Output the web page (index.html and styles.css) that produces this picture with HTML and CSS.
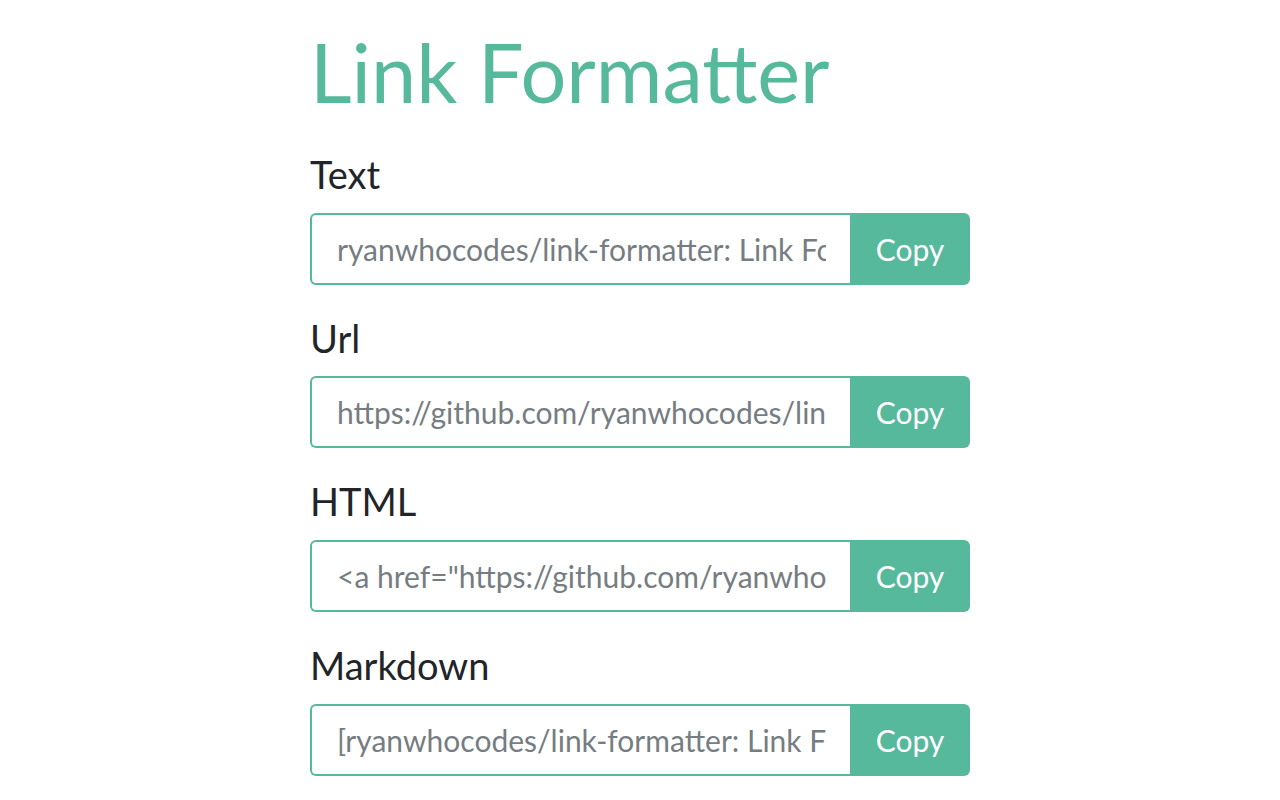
FILE: index.html
```html
<!DOCTYPE html>
<html lang="en">
<head>
<meta charset="utf-8">
<title>Link Formatter</title>
<link rel="stylesheet" href="styles.css">
</head>
<body>
<main class="container">
  <h1 class="title">Link Formatter</h1>

  <section class="field">
    <label class="field-label" for="f-text">Text</label>
    <div class="input-group">
      <input class="input" id="f-text" type="text" value="ryanwhocodes/link-formatter: Link Formatter" readonly>
      <button class="copy-btn" type="button">Copy</button>
    </div>
  </section>

  <section class="field">
    <label class="field-label" for="f-url">Url</label>
    <div class="input-group">
      <input class="input" id="f-url" type="text" value="https://github.com/ryanwhocodes/link-formatter" readonly>
      <button class="copy-btn" type="button">Copy</button>
    </div>
  </section>

  <section class="field">
    <label class="field-label" for="f-html">HTML</label>
    <div class="input-group">
      <input class="input" id="f-html" type="text" value="&lt;a href=&quot;https://github.com/ryanwhocodes/link-formatter&quot;&gt;ryanwhocodes/link-formatter&lt;/a&gt;" readonly>
      <button class="copy-btn" type="button">Copy</button>
    </div>
  </section>

  <section class="field">
    <label class="field-label" for="f-md">Markdown</label>
    <div class="input-group">
      <input class="input" id="f-md" type="text" value="[ryanwhocodes/link-formatter: Link Formatter](https://github.com/ryanwhocodes/link-formatter)" readonly>
      <button class="copy-btn" type="button">Copy</button>
    </div>
  </section>
</main>
</body>
</html>
```

FILE: styles.css
```css
* { box-sizing: border-box; }

html, body {
  margin: 0;
  padding: 0;
  background: #ffffff;
}

body {
  font-family: Lato, "Open Sans", sans-serif;
  color: #212529;
}

.container {
  width: 660px;
  margin: 0 auto;
  padding-top: 23px;
}

.title {
  margin: 0 0 32px 0;
  font-size: 81px;
  font-weight: 400;
  line-height: 1.2;
  color: #57b99c;
}

.field {
  display: flex;
  flex-direction: column;
  margin-bottom: 31px;
}

.field-label {
  font-size: 38px;
  line-height: 1.2;
  margin-bottom: 15px;
}

.input-group {
  display: flex;
  height: 72px;
}

.input {
  flex: 1;
  min-width: 0;
  height: 100%;
  border: 2px solid #57b99c;
  border-right: none;
  border-radius: 6px 0 0 6px;
  padding: 0 24px 0 25px;
  font-family: Lato, "Open Sans", sans-serif;
  font-size: 30px;
  color: #767d82;
  background: #fff;
  outline: none;
}

.copy-btn {
  width: 120px;
  height: 100%;
  border: none;
  border-radius: 0 6px 6px 0;
  background: #57b99c;
  color: #ffffff;
  font-family: Lato, "Open Sans", sans-serif;
  font-size: 30px;
  padding: 0;
  cursor: pointer;
}
```
